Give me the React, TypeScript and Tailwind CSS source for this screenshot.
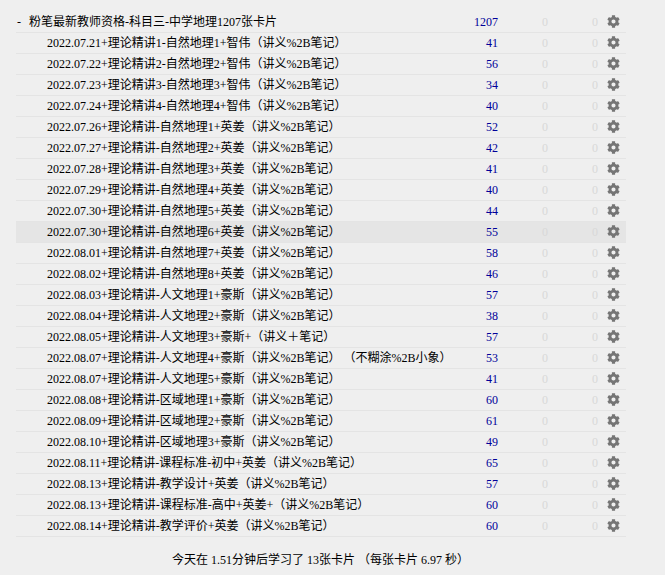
import { FaCog } from 'react-icons/fa'

const decks = [
  { name: '2022.07.21+理论精讲1-自然地理1+智伟（讲义%2B笔记）', count: 41 },
  { name: '2022.07.22+理论精讲2-自然地理2+智伟（讲义%2B笔记）', count: 56 },
  { name: '2022.07.23+理论精讲3-自然地理3+智伟（讲义%2B笔记）', count: 34 },
  { name: '2022.07.24+理论精讲4-自然地理4+智伟（讲义%2B笔记）', count: 40 },
  { name: '2022.07.26+理论精讲-自然地理1+英姜（讲义%2B笔记）', count: 52 },
  { name: '2022.07.27+理论精讲-自然地理2+英姜（讲义%2B笔记）', count: 42 },
  { name: '2022.07.28+理论精讲-自然地理3+英姜（讲义%2B笔记）', count: 41 },
  { name: '2022.07.29+理论精讲-自然地理4+英姜（讲义%2B笔记）', count: 40 },
  { name: '2022.07.30+理论精讲-自然地理5+英姜（讲义%2B笔记）', count: 44 },
  { name: '2022.07.30+理论精讲-自然地理6+英姜（讲义%2B笔记）', count: 55, active: true },
  { name: '2022.08.01+理论精讲-自然地理7+英姜（讲义%2B笔记）', count: 58 },
  { name: '2022.08.02+理论精讲-自然地理8+英姜（讲义%2B笔记）', count: 46 },
  { name: '2022.08.03+理论精讲-人文地理1+豪斯（讲义%2B笔记）', count: 57 },
  { name: '2022.08.04+理论精讲-人文地理2+豪斯（讲义%2B笔记）', count: 38 },
  { name: '2022.08.05+理论精讲-人文地理3+豪斯+（讲义＋笔记）', count: 57 },
  { name: '2022.08.07+理论精讲-人文地理4+豪斯（讲义%2B笔记） （不糊涂%2B小象）', count: 53 },
  { name: '2022.08.07+理论精讲-人文地理5+豪斯（讲义%2B笔记）', count: 41 },
  { name: '2022.08.08+理论精讲-区域地理1+豪斯（讲义%2B笔记）', count: 60 },
  { name: '2022.08.09+理论精讲-区域地理2+豪斯（讲义%2B笔记）', count: 61 },
  { name: '2022.08.10+理论精讲-区域地理3+豪斯（讲义%2B笔记）', count: 49 },
  { name: '2022.08.11+理论精讲-课程标准-初中+英姜（讲义%2B笔记）', count: 65 },
  { name: '2022.08.13+理论精讲-教学设计+英姜（讲义%2B笔记）', count: 57 },
  { name: '2022.08.13+理论精讲-课程标准-高中+英姜+（讲义%2B笔记）', count: 60 },
  { name: '2022.08.14+理论精讲-教学评价+英姜（讲义%2B笔记）', count: 60 },
]

function Row({ name, count, active, top }: { name: string; count: number; active?: boolean; top?: boolean }) {
  return (
    <div className={`flex h-[21px] items-center border-b border-[#e4e4e4] ${active ? 'bg-[#e5e5e5]' : ''}`}>
      {top ? (
        <div className="flex-1 min-w-0 flex -mt-px">
          <span className="w-[13px] pl-px">-</span>
          <span>{name}</span>
        </div>
      ) : (
        <div className="flex-1 min-w-0 pl-[31px] whitespace-pre">{name}</div>
      )}
      <div className="w-[60px] text-right text-[#000099]">{count}</div>
      <div className="w-[50px] text-right text-[#d8d8d8]">0</div>
      <div className="w-[50px] text-right text-[#d8d8d8]">0</div>
      <div className="w-[28px] flex justify-center pl-[2px] -mt-px">
        <FaCog className="w-[13px] h-[13px] text-[#757575]" />
      </div>
    </div>
  )
}

export default function App() {
  return (
    <div className="h-[575px] w-[665px] overflow-hidden bg-[#efefef] text-[12px] text-black font-['Liberation_Serif','Noto_Sans_CJK_SC',serif]">
      <div className="ml-4 w-[610px] pt-[12px]">
        <Row top name="粉笔最新教师资格-科目三-中学地理1207张卡片" count={1207} />
        {decks.map((d, i) => (
          <Row key={i} name={d.name} count={d.count} active={d.active} />
        ))}
      </div>
      <div className="mt-[14px] pr-[24px] text-center">今天在 1.51分钟后学习了 13张卡片 （每张卡片 6.97 秒）</div>
    </div>
  )
}
